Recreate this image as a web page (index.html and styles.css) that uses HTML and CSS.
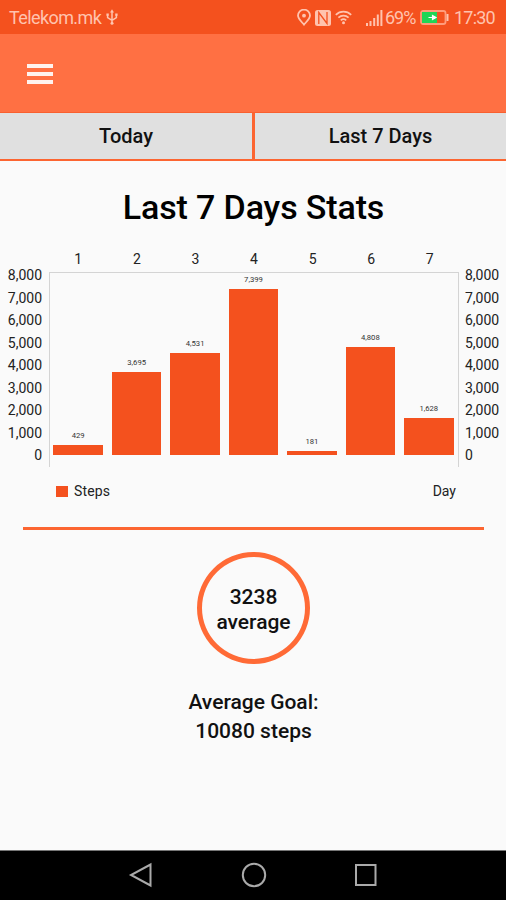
FILE: index.html
```html
<!DOCTYPE html>
<html lang="en">
<head>
    <meta charset="UTF-8">
    <meta name="viewport" content="width=device-width, initial-scale=1.0">
    <title>Last 7 Days Stats</title>
    <link rel="stylesheet" href="styles.css">
</head>
<body>
    <!-- Phone status bar -->
    <div class="status-bar">
        <span class="carrier">Telekom.mk</span>
        <svg class="usb" width="12" height="17" viewBox="0 0 12 17" fill="none" stroke="currentColor" stroke-width="1.5">
            <path d="M6 2v12M1.6 6v2.6L6 11.4l4.4-2.8V6" />
            <path d="M6 .3L8 3.4H4zM.4 4.6h2.4v2.2H.4zM9.2 4.6h2.4v2.2H9.2z" fill="currentColor" stroke="none" />
            <circle cx="6" cy="14.2" r="1.5" fill="currentColor" stroke="none" />
        </svg>
        <svg class="pin" width="14" height="17" viewBox="0 0 14 17" fill="none" stroke="currentColor" stroke-width="1.8">
            <path d="M7 15.6C4.4 12.6 1 9.8 1 6.6a6 6 0 0 1 12 0c0 3.2-3.4 6-6 9z" />
            <circle cx="7" cy="6.7" r="1.9" fill="currentColor" stroke="none" />
        </svg>
        <svg class="nfc" width="16" height="16" viewBox="0 0 16 16">
            <rect width="16" height="16" rx="2.5" fill="currentColor" />
            <path d="M3.8 14V2.5l8.2 11V2" fill="none" stroke="#f4511e" stroke-width="1.3" />
        </svg>
        <svg class="wifi" width="17" height="15" viewBox="0 0 17 15" fill="none" stroke="currentColor" stroke-width="1.7">
            <path d="M.8 4.8a11 11 0 0 1 15.4 0M3.4 7.7a7.4 7.4 0 0 1 10.2 0M5.8 10.4a4 4 0 0 1 5.4 0" />
            <circle cx="8.5" cy="12.7" r="1.5" fill="currentColor" stroke="none" />
        </svg>
        <svg class="signal" width="17" height="16" viewBox="0 0 17 16" fill="currentColor">
            <path d="M0 13h2v3H0zM3.5 11h2v5h-2zM7.2 8h2v8h-2zM10.8 4.5h2V16h-2zM14.4 0h2v16h-2z" />
        </svg>
        <span class="percent">69%</span>
        <svg class="battery" width="29" height="15" viewBox="0 0 29 15">
            <rect x="1" y="1" width="24.5" height="13" rx="2" fill="none" stroke="#ff9c7c" stroke-width="1.8" />
            <rect x="2" y="2" width="15" height="11" fill="#1fd655" />
            <path d="M26.5 4h2v7h-2z" fill="currentColor" />
            <path d="M8.5 7.5h8M12.5 5.5l3.5 2-3.5 2z" fill="#fff" stroke="#fff" stroke-width="1.2" />
        </svg>
        <span class="clock">17:30</span>
    </div>

    <!-- Toolbar -->
    <header class="toolbar">
        <div class="menu-icon">
            <span></span>
            <span></span>
            <span></span>
        </div>
    </header>

    <!-- Tabs -->
    <nav class="tabs">
        <div class="tab">Today</div>
        <div class="tab">Last 7 Days</div>
    </nav>

    <main>
        <h1>Last 7 Days Stats</h1>

        <!-- Bar Chart, bar height is steps * 0.0225px -->
        <section class="chart">
            <div class="days">
                <span>1</span><span>2</span><span>3</span><span>4</span><span>5</span><span>6</span><span>7</span>
            </div>
            <div class="axis axis-left">
                <span>8,000</span><span>7,000</span><span>6,000</span><span>5,000</span><span>4,000</span><span>3,000</span><span>2,000</span><span>1,000</span><span>0</span>
            </div>
            <div class="plot">
                <div class="slot"><span class="value">429</span><div class="bar" style="height: 9.7px"></div></div>
                <div class="slot"><span class="value">3,695</span><div class="bar" style="height: 83.1px"></div></div>
                <div class="slot"><span class="value">4,531</span><div class="bar" style="height: 101.9px"></div></div>
                <div class="slot"><span class="value">7,399</span><div class="bar" style="height: 166.5px"></div></div>
                <div class="slot"><span class="value">181</span><div class="bar" style="height: 4.1px"></div></div>
                <div class="slot"><span class="value">4,808</span><div class="bar" style="height: 108.2px"></div></div>
                <div class="slot"><span class="value">1,628</span><div class="bar" style="height: 36.6px"></div></div>
            </div>
            <div class="axis axis-right">
                <span>8,000</span><span>7,000</span><span>6,000</span><span>5,000</span><span>4,000</span><span>3,000</span><span>2,000</span><span>1,000</span><span>0</span>
            </div>
            <div class="legend">
                <span class="swatch"></span>
                <span class="legend-steps">Steps</span>
                <span class="legend-day">Day</span>
            </div>
        </section>

        <hr class="divider">

        <!-- Average -->
        <div class="average">
            <span>3238</span>
            <span>average</span>
        </div>
        <p class="goal">Average Goal:<br>10080 steps</p>
    </main>

    <!-- Android navigation buttons -->
    <footer class="nav-bar">
        <svg width="26" height="26" viewBox="0 0 26 26"><path d="M22.5 2.5v21L3 13z" /></svg>
        <svg width="26" height="26" viewBox="0 0 26 26"><circle cx="13" cy="13" r="11.2" /></svg>
        <svg width="26" height="26" viewBox="0 0 26 26"><rect x="3" y="3" width="19.5" height="20" /></svg>
    </footer>
</body>
</html>
```
FILE: styles.css
```css
* {
    box-sizing: border-box;
}

body {
    font-family: Roboto, sans-serif;
    margin: 0;
    height: 900px;
    display: flex;
    flex-direction: column;
    background-color: #fafafa;
    color: #111;
    overflow: hidden;
}

/* Status Bar */
.status-bar {
    height: 34px;
    display: flex;
    align-items: center;
    padding: 1px 11px 0 9px;
    background-color: #f4511e;
    color: #ffc3ae;
    font-size: 18px;
    line-height: 34px;
}

.carrier {
    width: 93px;
    letter-spacing: -0.6px;
}

.usb {
    margin-left: 4px;
}

.pin {
    margin-left: auto;
}

.nfc {
    margin-left: 4px;
}

.wifi {
    margin-left: 4px;
}

.signal {
    margin-left: 14px;
}

.percent {
    margin-left: 2px;
    width: 32px;
    letter-spacing: -1px;
}

.battery {
    margin-left: 3px;
}

.clock {
    margin-left: 5px;
    width: 41px;
    letter-spacing: -0.8px;
}

/* Toolbar */
.toolbar {
    height: 79px;
    padding: 30px 27px;
    background-color: #ff7043;
    border-bottom: 1px solid #f9602f;
}

.menu-icon {
    width: 26px;
    display: flex;
    flex-direction: column;
    gap: 4px;
}

.menu-icon span {
    height: 4px;
    background-color: #fff3ef;
}

/* Tabs */
.tabs {
    height: 48px;
    display: grid;
    grid-template-columns: 252px 251px;
    column-gap: 3px;
    padding-bottom: 3px;
    background-color: #fc6531;
}

.tab {
    background-color: #e0e0e0;
    text-align: center;
    font-size: 20px;
    font-weight: 500;
    line-height: 46px;
}

main {
    flex: 1;
}

h1 {
    margin: 26px 0 0;
    padding-left: 1px;
    text-align: center;
    font-size: 34px;
    font-weight: 500;
    line-height: 40px;
    letter-spacing: -0.13px;
    color: #000;
}

/* Chart */
.chart {
    display: grid;
    grid-template-columns: 42px 410px 41px;
    grid-template-rows: 20px 195px 48px;
    column-gap: 7px;
    margin-top: 24px;
    padding-top: 1px;
    font-size: 14px;
    color: #222;
}

.days {
    grid-column: 2;
    display: grid;
    grid-template-columns: repeat(7, 1fr);
    text-align: center;
    line-height: 14px;
}

.axis {
    grid-row: 2;
    display: flex;
    flex-direction: column;
    margin-top: -8px;
    line-height: 22.5px;
}

.axis-left {
    grid-column: 1;
    text-align: right;
}

.axis-right {
    grid-column: 3;
    margin-left: -1px;
}

.plot {
    grid-column: 2;
    grid-row: 2;
    display: grid;
    grid-template-columns: repeat(7, 1fr);
    padding: 0 1px 12px 0;
    box-shadow: inset 1px 0 #d4d4d4, inset -1px 0 #d4d4d4, inset 0 1px #d4d4d4;
}

.slot {
    display: flex;
    flex-direction: column;
    justify-content: flex-end;
    align-items: center;
}

.bar {
    width: 49.5px;
    background-color: #f4511e;
}

.value {
    font-size: 7.7px;
    line-height: 9px;
    margin-bottom: 5px;
    color: #333;
}

.legend {
    grid-column: 2;
    display: flex;
    align-items: center;
    padding: 0 3px 0 7px;
}

.swatch {
    width: 12px;
    height: 11px;
    margin-right: 6px;
    background-color: #f4511e;
}

.legend-steps {
    letter-spacing: 0.15px;
}

.legend-day {
    margin-left: auto;
}

.divider {
    width: 461px;
    height: 3px;
    margin: 12px 0 0 23px;
    border: none;
    background-color: #fc6531;
}

/* Average Circle */
.average {
    width: 113px;
    height: 112px;
    margin: 22px auto 0;
    display: flex;
    flex-direction: column;
    align-items: center;
    justify-content: center;
    padding: 3px 0 0 1px;
    border: 5px solid #ff6a36;
    border-radius: 50%;
    font-size: 21px;
    font-weight: 500;
    line-height: 25px;
}

.goal {
    margin: 24px 0 0;
    padding-left: 1px;
    text-align: center;
    font-size: 21px;
    font-weight: 500;
    line-height: 29px;
}

/* Navigation Bar */
.nav-bar {
    height: 50px;
    display: flex;
    justify-content: center;
    gap: 86.5px;
    padding: 11px 0 0 1px;
    background-color: #000;
    border-top: 1px solid #777;
}

.nav-bar svg {
    fill: none;
    stroke: #aaa;
    stroke-width: 2;
}
```
